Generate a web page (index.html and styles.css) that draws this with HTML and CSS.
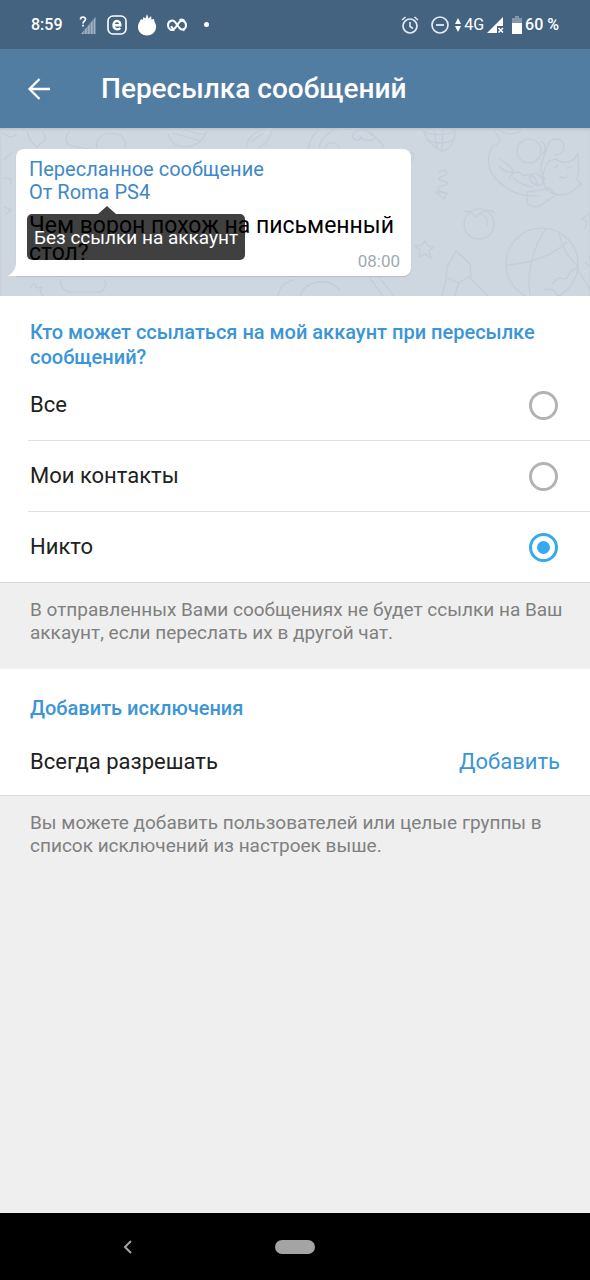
FILE: index.html
```
<!DOCTYPE html>
<html lang="ru">
<head>
    <meta charset="UTF-8">
    <meta name="viewport" content="width=device-width, initial-scale=1.0">
    <title>Пересылка сообщений</title>
    <link rel="stylesheet" href="styles.css">
</head>
<body>

<div class="status-bar">
    <div class="status-left">
        <span class="clock">8:59</span>
        <svg class="icon-signal" width="18" height="20" viewBox="0 0 18 20">
            <path d="M16.500 2v17H2z" fill="#9fb0c0"/>
            <path d="M5.200 13v6M8.200 10v9M11.200 7v12M14.200 4v15" stroke="#5b7791" stroke-width="0.800"/>
            <path d="M0 0h8v12H0z" fill="#436381"/>
            <path d="M1.500 4.500C1.500 1.200 6.500 1.200 6.500 4.300C6.500 6.200 4 6.300 4 8.500M4 9.800v1.800" fill="none" stroke="#fff" stroke-width="1.700"/>
        </svg>
        <svg class="icon-e" width="20" height="20" viewBox="0 0 20 20">
            <rect x="1" y="1" width="18" height="18" rx="5" fill="none" stroke="#fff" stroke-width="1.600"/>
            <path d="M6.500 10.300h6.800C13.500 4.500 6.500 4.700 6.500 10C6.500 14.800 11.500 15 13.300 13" fill="none" stroke="#fff" stroke-width="2.400"/>
        </svg>
        <svg class="icon-flame" width="20" height="22" viewBox="0 0 20 22">
            <path d="M2.500 8l1.500-3 1.500 1 1-3 2 1.500L10 0l1.500 4.500L14 2l.5 3.500L17 5l.5 3C19 10 19.300 12 19 14c-.6 4.500-4.500 7.500-9 7.500S1.500 18.500 1 14c-.2-2.200.3-4.300 1.500-6z" fill="#fff"/>
        </svg>
        <svg class="icon-infinity" width="20" height="14" viewBox="0 0 20 14">
            <path d="M2.500 2.500l1 1.200M7.500 11.500C4.500 13 1 11 1 7.200C1 3 5.500 1.200 8 4l4.500 6c2.500 3 6.500 1 6.500-2.800S15 1.500 12.500 4L8.500 9.500C7 12 4.500 10.500 4.500 8M16 11.500l1.500 1M12.500 2.500c2-1.500 3.500-1 5 .5" fill="none" stroke="#fff" stroke-width="2"/>
        </svg>
        <span class="dot"></span>
    </div>
    <div class="status-right">
        <svg class="icon-alarm" width="20" height="20" viewBox="0 0 20 20">
            <circle cx="10" cy="11" r="7" fill="none" stroke="#e4eaf0" stroke-width="1.700"/>
            <path d="M10 7v4.500l3 2M2 5l3.500-3M18 5l-3.500-3" fill="none" stroke="#e4eaf0" stroke-width="1.600"/>
        </svg>
        <svg class="icon-dnd" width="20" height="20" viewBox="0 0 20 20">
            <circle cx="10" cy="10" r="8" fill="none" stroke="#e4eaf0" stroke-width="1.700"/>
            <path d="M6 10h8" stroke="#e4eaf0" stroke-width="1.800"/>
        </svg>
        <svg class="icon-data" width="6" height="16" viewBox="0 0 6 16">
            <path d="M3 1l3 6H0zM3 15L0 9h6z" fill="#fff"/>
        </svg>
        <span class="network">4G</span>
        <svg class="icon-cell" width="18" height="18" viewBox="0 0 18 18">
            <path d="M16 1v9h-6v7H0z" fill="#fff"/>
            <path d="M11.500 12l4.500 4.500M16 12l-4.500 4.500" stroke="#fff" stroke-width="1.500"/>
        </svg>
        <svg class="icon-battery" width="10" height="18" viewBox="0 0 10 18">
            <path d="M3 0h4v2h3v5H0V2h3z" fill="#8397ab"/>
            <path d="M0 7h10v11H0z" fill="#fff"/>
        </svg>
        <span class="battery">60 %</span>
    </div>
</div>

<header class="toolbar">
    <button class="back" type="button" aria-label="Назад">
        <svg width="24" height="24" viewBox="0 0 24 24">
            <path d="M12.500 2L2.500 12l10 10M2.500 12H23" fill="none" stroke="#fff" stroke-width="2.300"/>
        </svg>
    </button>
    <h1>Пересылка сообщений</h1>
</header>

<main>
    <section class="preview">
        <!-- Chat wallpaper -->
        <svg class="wallpaper" width="590" height="168" viewBox="0 0 590 168">
            <g fill="none" stroke="#c3ccd8" stroke-width="1.200">
                <path d="M2 5l8 4 7-2M27 0c0 8 3 14 10 19l9-8-4-10M70 3c-6 6-5 12 1 15l19 3M97 20c-2-8 4-14 12-15l12 2c5 5 5 9 4 15"/>
                <path d="M168 5c2 11 11 14 19 14 8-1 16-6 20-16M172 5l29 8M183 2l22 5M246 20c1-11 9-18 26-20-1 9-5 16-13 20M251 14l12-9"/>
                <path d="M308 22c2-12 8-20 16-22M319 20c2-13 14-20 31-20s29 10 34 20M325 20c3-7 12-7 14 0M352 8c2-8 20-8 23 2-4 5-13 2-14-1-2 5-7 4-9-1z"/>
                <path d="M423 1c2 10 12 20 19 22 8-1 14-10 13-21M423 3c10 5 23 5 32 0M434 1l3 19M443 2l-1 20M427 12c9 4 19 4 27-1M411 24c4 3 4 6 0 9"/>
                <path d="M491 1c11 8 12 14 2 17-8 12-5 25 4 34 15 16 31 16 42 16M498 1c9 8 21 5 28-2"/>
                <circle cx="529" cy="23" r="12"/>
                <path d="M540 14c7 0 6 10 2 12M548 17c2-7 12-8 15-2 3 8-3 13-9 12M548 17l-5 14c-3 9-4 14 3 21M500 31c5 4 14 9 13 13-6 1-12-2-13-6M509 51c3-8 10-9 14-3 7-3 13 0 14 8M513 50c6 5 12 8 20 9M530 47c7-5 16 4 12 9-5 3-13-1-12-9"/>
                <path d="M549 33l7-2c6 5 14 4 19-1l3-5 1 15-2 12 5 4-6 4c-6 8-18 9-28 3-8-10-6-20 1-30zM555 40l3-3M567 40l5-1M559 48c4 3 7 2 9-1"/>
                <path d="M527 64v11c4 4 10 5 14 2l15-10-7-7-14 3zM438 45c5-4 9-3 9 0s-8 3-8 6 8 1 8 4-9 2-9 6 7 1 7 5M436 64l8 7 3-6z"/>
                <path d="M464 83l7 1 5 5c4-5 12-9 19-4"/>
                <circle cx="479" cy="96" r="15"/>
                <path d="M479 86c7 0 9 6 8 12"/>
                <path d="M425 113l3 5 6 1-5 4 2 7-6-4-6 3 1-7-5-4 7-1z"/>
                <path d="M447 139l9-16 14 13 1 12-13 7-12-6zM459 155l-5 14M468 148l20 20M446 151l-4 17"/>
                <circle cx="542" cy="136" r="36"/>
                <path d="M546 100c-12 19-20 41-16 67M506 137c21-1 43-7 61-23M559 104c3 17 10 27 20 35M552 156l6-6 8 1 5-8 8-5M544 162c7-2 10-1 14 6M577 140l13 22M585 134l5 5"/>
                <path d="M590 85l-8 6 5 3-2 7M12 24l-8 8M3 51c5-3 9 0 8 5M4 79l7 3-6 5M30 160l4-5 3 5 5-1-2 5 3 4M61 151c-2 8 4 13 11 13h28c6-3 7-9 4-13M278 168c2-10 8-15 17-16M300 168c5-15 26-20 40-6M369 149l14 19M379 149l15 19"/>
            </g>
        </svg>

        <div class="message">
            <svg class="tail" width="9" height="14" viewBox="0 0 9 14">
                <path d="M9 0v14H0c5-3 8-7 8-14z" fill="#fff"/>
            </svg>
            <div class="forwarded">Пересланное сообщение<br>От Roma PS4</div>
            <div class="tooltip">Без ссылки на аккаунт</div>
            <p class="message-text">Чем ворон похож на письменный стол?</p>
            <time class="message-time">08:00</time>
        </div>
    </section>

    <form>
        <fieldset class="section">
            <legend>Кто может ссылаться на мой аккаунт при пересылке сообщений?</legend>
            <label class="row">
                <span>Все</span>
                <input type="radio" name="forwards" value="all">
            </label>
            <label class="row">
                <span>Мои контакты</span>
                <input type="radio" name="forwards" value="contacts">
            </label>
            <label class="row">
                <span>Никто</span>
                <input type="radio" name="forwards" value="nobody" checked>
            </label>
        </fieldset>
        <p class="hint">В отправленных Вами сообщениях не будет ссылки на Ваш аккаунт, если переслать их в другой чат.</p>

        <div class="section exceptions">
            <h2>Добавить исключения</h2>
            <div class="row">
                <span>Всегда разрешать</span>
                <button class="add" type="button">Добавить</button>
            </div>
        </div>
        <p class="hint">Вы можете добавить пользователей или целые группы в список исключений из настроек выше.</p>
    </form>
</main>

<nav class="nav-bar">
    <button class="nav-back" type="button" aria-label="Назад">
        <svg width="10" height="14" viewBox="0 0 10 14">
            <path d="M8 1L2 7l6 6" fill="none" stroke="#a4a4a4" stroke-width="2"/>
        </svg>
    </button>
    <button class="nav-home" type="button" aria-label="Домой"></button>
    <span></span>
</nav>

</body>
</html>
```
FILE: styles.css
```
* {
    box-sizing: border-box;
}

body {
    margin: 0;
    min-height: 100vh;
    display: flex;
    flex-direction: column;
    background-color: #efefef;
    color: #212121;
    font-family: Roboto, "Noto Sans", sans-serif;
    font-size: 22px;
    line-height: 26px;
}

button {
    padding: 0;
    border: none;
    background: none;
    font: inherit;
    cursor: pointer;
}

svg {
    display: block;
    flex: none;
}

/* Status bar */
.status-bar {
    display: flex;
    justify-content: space-between;
    align-items: center;
    height: 49px;
    padding: 0 31px;
    background-color: #436381;
    color: #fff;
    font-size: 16px;
    line-height: 20px;
    font-weight: 500;
}

.status-left,
.status-right {
    display: flex;
    align-items: center;
}

.status-left {
    gap: 10px;
}

.clock {
    margin-right: 6px;
}

.dot {
    width: 5px;
    height: 5px;
    margin-left: 7px;
    border-radius: 50%;
    background-color: #fff;
}

.status-right {
    gap: 3px;
}

.icon-alarm {
    margin-right: 7px;
}

.icon-data {
    margin-left: 2px;
}

.network {
    font-weight: 400;
}

.icon-battery {
    margin-left: 4px;
}

/* Toolbar */
.toolbar {
    display: flex;
    align-items: center;
    height: 79px;
    padding: 0 27px;
    background-color: #527da3;
    color: #fff;
}

.toolbar h1 {
    margin: 0 0 0 50px;
    font-size: 28px;
    line-height: 32px;
    font-weight: 500;
}

main {
    flex: 1;
}

/* Message preview */
.preview {
    position: relative;
    overflow: hidden;
    padding: 21px 16px 20px;
    background-color: #ced6e0;
    box-shadow: inset 0 2px 2px #bcc5d0;
}

.wallpaper {
    position: absolute;
    top: 0;
    left: 0;
}

.message {
    position: relative;
    display: flow-root;
    width: 395px;
    max-width: 100%;
    padding: 9px 11px 5px 13px;
    border-radius: 8px 8px 8px 0;
    background-color: #fff;
    box-shadow: 0 1px 1px #b4bfcc;
    color: #000;
}

.tail {
    position: absolute;
    left: -8px;
    bottom: 0;
}

.forwarded {
    color: #3e88c7;
    font-size: 20px;
    line-height: 23px;
}

.message-text {
    margin: 8px 0 0;
    font-size: 23px;
    line-height: 27px;
}

.message-time {
    float: right;
    margin-top: -15px;
    color: #a1aab3;
    font-size: 17px;
    line-height: 20px;
}

.tooltip {
    position: absolute;
    top: 65px;
    left: 11px;
    padding: 12px 7px 11px;
    border-radius: 5px;
    background-color: rgba(0, 0, 0, 0.75);
    color: #fff;
    font-size: 19px;
    line-height: 23px;
    white-space: nowrap;
}

.tooltip::before {
    content: "";
    position: absolute;
    bottom: 100%;
    left: 71px;
    border: 9px solid transparent;
    border-top: none;
    border-bottom: 8px solid rgba(0, 0, 0, 0.75);
}

/* Settings */
.section {
    margin: 0;
    padding: 0 0 0 28px;
    border: none;
    border-bottom: 1px solid #dadada;
    background-color: #fff;
}

legend,
h2 {
    float: left;
    width: 100%;
    margin: 0;
    padding: 24px 32px 0 2px;
    color: #3b95d6;
    font-size: 20px;
    line-height: 25px;
    font-weight: 500;
}

.row {
    display: flex;
    clear: both;
    justify-content: space-between;
    align-items: center;
    height: 70px;
    padding: 0 32px 0 2px;
}

.row + .row {
    height: 71px;
    border-top: 1px solid #e0e0e0;
}

input[type="radio"] {
    appearance: none;
    width: 29px;
    height: 29px;
    margin: 0;
    border: 3px solid #b3b3b3;
    border-radius: 50%;
}

input[type="radio"]:checked {
    padding: 5px;
    border-color: #37a9f0;
    background: #37a9f0 content-box;
}

.exceptions h2 {
    padding-top: 27px;
    padding-bottom: 8px;
}

.exceptions .row {
    height: 66px;
    padding-right: 30px;
}

.add {
    color: #3b95d6;
}

.hint {
    margin: 0;
    padding: 15px 24px 25px 30px;
    color: #808080;
    font-size: 19px;
    line-height: 23px;
}

/* Navigation bar */
.nav-bar {
    display: grid;
    grid-template-columns: 1fr 40px 1fr;
    align-items: center;
    height: 67px;
    background-color: #000;
}

.nav-back {
    justify-self: center;
    padding-right: 20px;
}

.nav-home {
    height: 14px;
    border-radius: 7px;
    background-color: #a4a4a4;
}
```
